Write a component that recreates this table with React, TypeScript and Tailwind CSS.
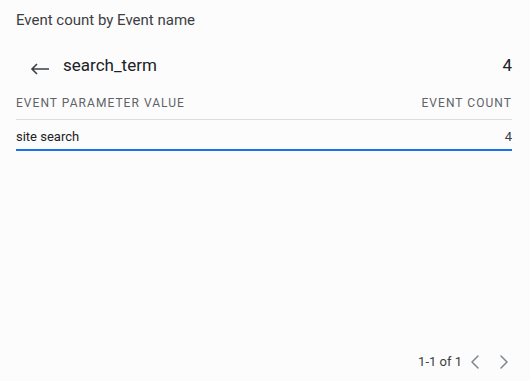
import { ChevronLeft, ChevronRight } from "lucide-react";

const rows = [{ value: "site search", count: 4 }];

export default function App() {
  return (
    <div
      className="w-[530px] h-[381px] bg-[#fcfcfc] flex flex-col text-[#202124]"
      style={{ fontFamily: "Roboto, 'Liberation Sans', sans-serif" }}
    >
      <div className="pl-4 pt-[10px] text-[15px] leading-[20px] text-[#3c4043]">
        Event count by Event name
      </div>

      <div className="flex items-center pl-4 pr-[18px] mt-[24px] h-[24px]">
        <svg
          width="20"
          height="14"
          viewBox="0 0 20 14"
          className="ml-[14px] mt-[6px] text-[#3c4043]"
          fill="none"
          stroke="currentColor"
          strokeWidth="1.6"
        >
          <path d="M19 7H2M7 2L2 7l5 5" />
        </svg>
        <div className="ml-[13px] text-[17px] text-[#202124]">search_term</div>
        <div className="ml-auto text-[17px]">4</div>
      </div>

      <div className="ml-4 mr-[18px] mt-[9px]">
        <div className="flex justify-between items-center h-[33px] border-b border-[#dadce0] text-[12px] tracking-[1.05px] text-[#5f6368]">
          <span>EVENT PARAMETER VALUE</span>
          <span>EVENT COUNT</span>
        </div>
        {rows.map((row) => (
          <div
            key={row.value}
            className="flex justify-between items-center h-[31px] pt-[4px] border-b-2 border-[#1a73e8] text-[13px] text-[#202124]"
          >
            <span>{row.value}</span>
            <span className="text-[#3c4043]">{row.count}</span>
          </div>
        ))}
      </div>

      <div className="mt-auto mb-[7px] flex items-center justify-end pr-[14px] text-[13px] text-[#3c4043]">
        <span className="mr-[1px]">1-1 of 1</span>
        <ChevronLeft className="w-6 h-6 text-[#80868b]" strokeWidth={1.5} />
        <ChevronRight className="ml-[5px] w-6 h-6 text-[#80868b]" strokeWidth={1.5} />
      </div>
    </div>
  );
}
